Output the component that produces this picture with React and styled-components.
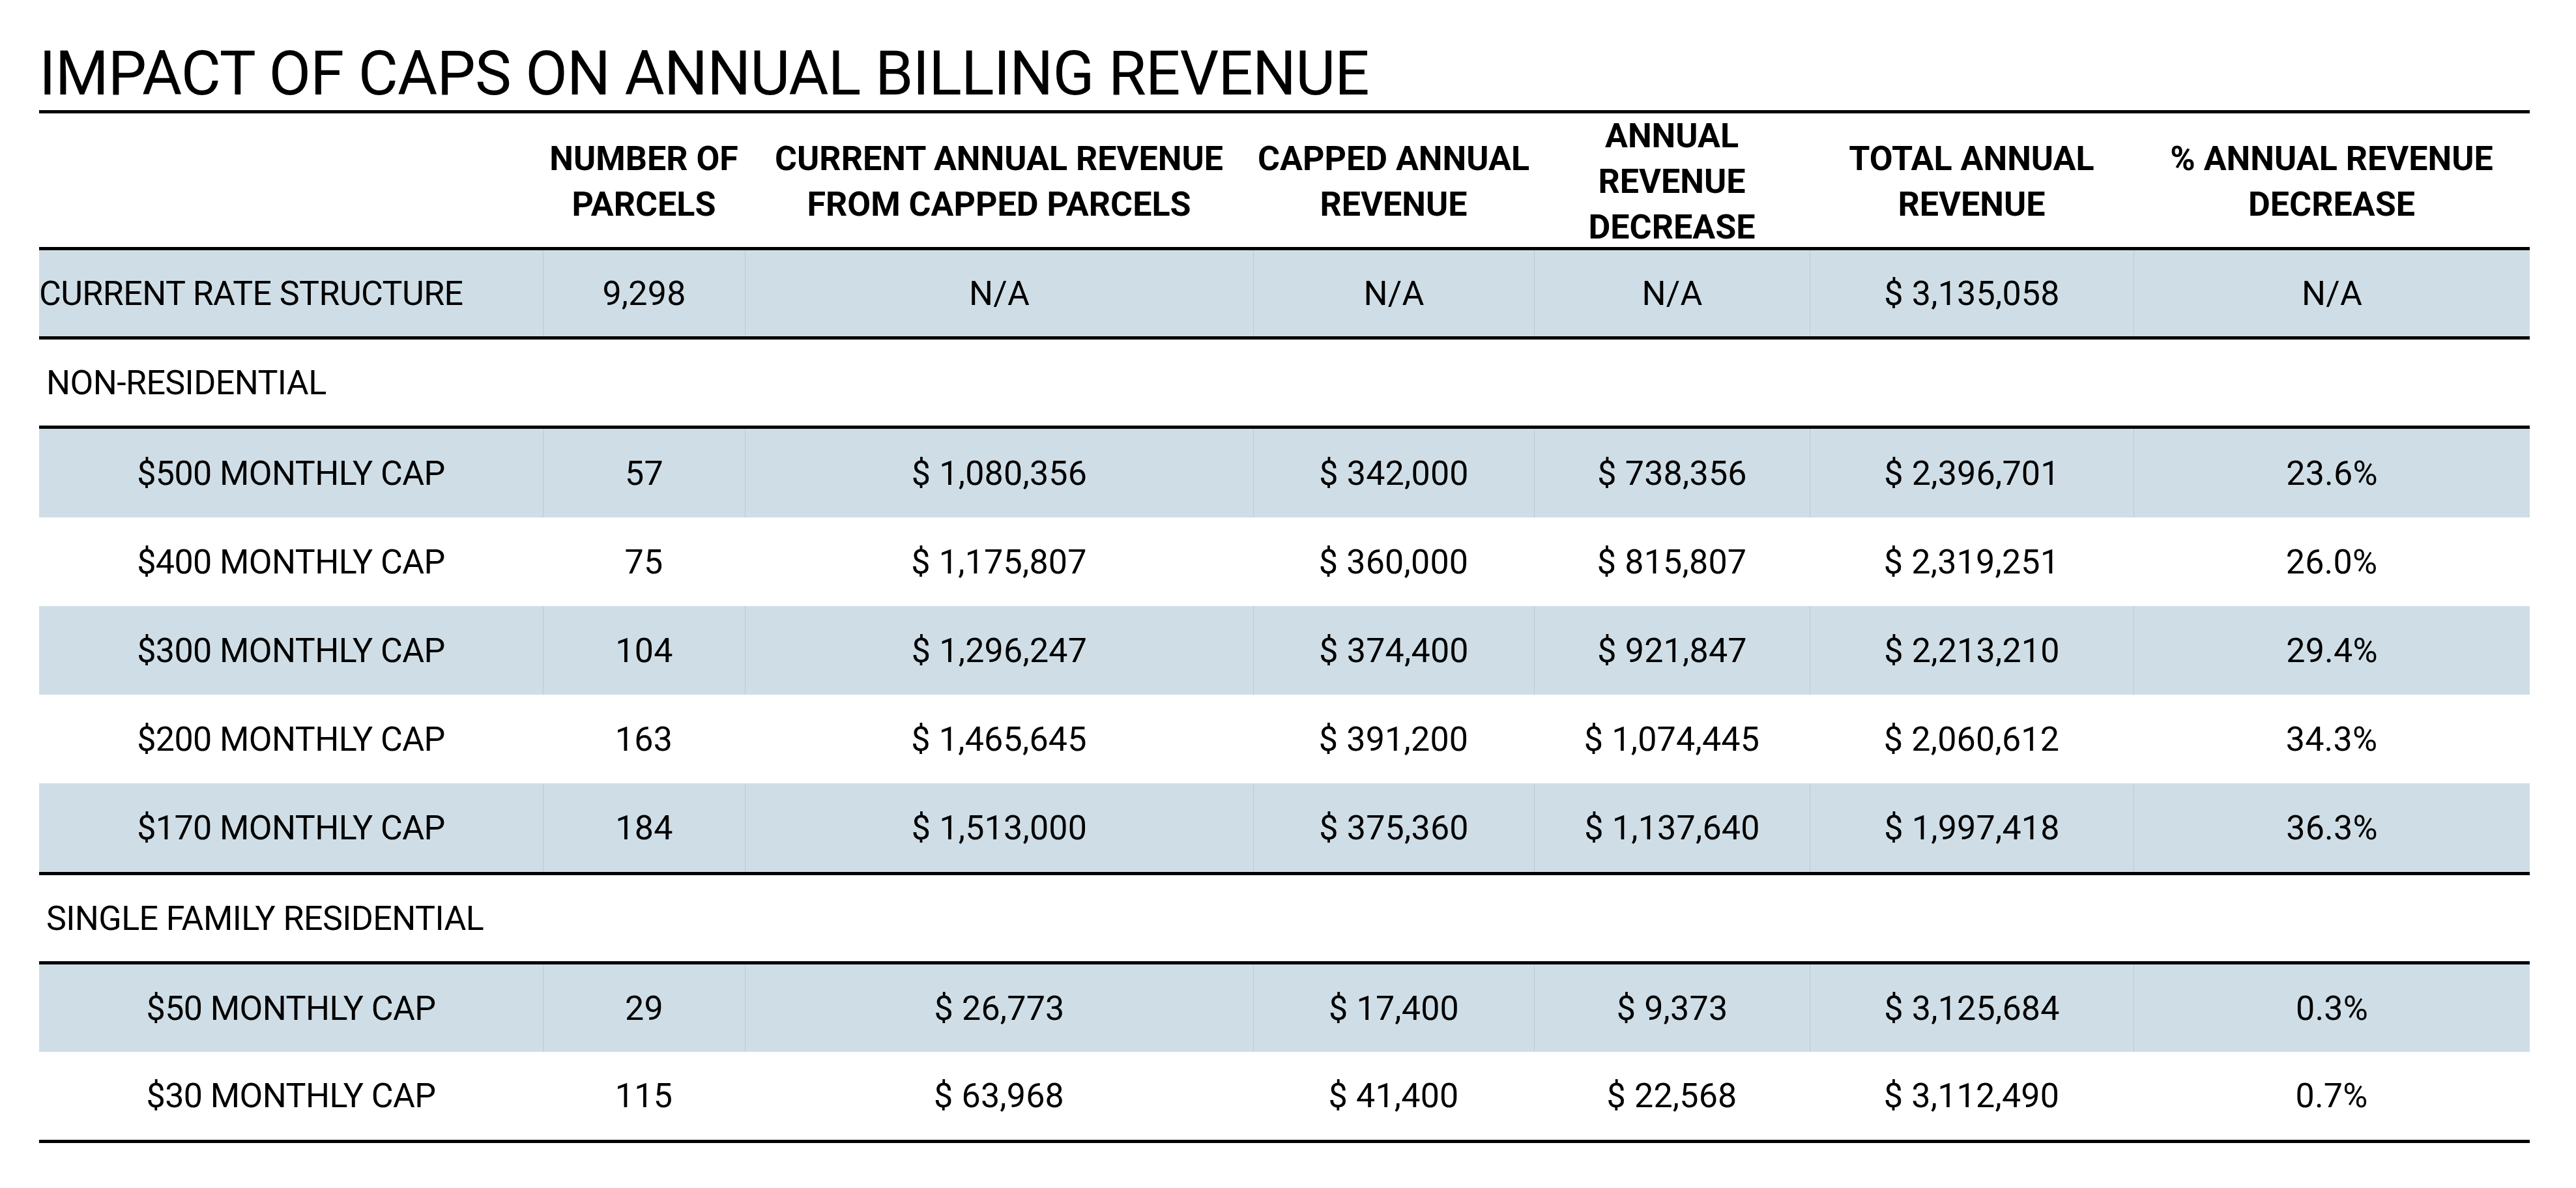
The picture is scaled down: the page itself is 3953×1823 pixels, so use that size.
import React from "react";
import styled, { createGlobalStyle } from "styled-components";

const GlobalStyle = createGlobalStyle`
  html, body {
    margin: 0;
    padding: 0;
    background: #ffffff;
  }
  body {
    font-family: Roboto, "Liberation Sans", Arial, sans-serif;
    color: #000000;
  }
`;

const COLS = "773px 310px 780px 431px 423px 497px 608px";

const Page = styled.div`
  padding: 66px 0 0 60px;
  width: 3822px;
`;

const Title = styled.h1`
  margin: 0;
  padding-bottom: 9px;
  border-bottom: 5px solid #000;
  font-family: Roboto, "Liberation Sans", sans-serif;
  font-weight: 400;
  font-size: 94px;
  line-height: 94px;
  letter-spacing: -0.9px;
  white-space: nowrap;
`;

const Row = styled.div`
  display: grid;
  grid-template-columns: ${COLS};
  height: ${(p) => p.$h}px;
  background: ${(p) => (p.$shaded ? "#cfdee6" : "#ffffff")};
  border-bottom: ${(p) => (p.$ruled ? "5px solid #000" : "none")};
  box-sizing: content-box;
`;

const HeadCell = styled.div`
  display: flex;
  align-items: center;
  justify-content: center;
  text-align: center;
  font-weight: 700;
  font-size: 52px;
  line-height: 70px;
  white-space: nowrap;
`;

const Cell = styled.div`
  display: flex;
  align-items: center;
  justify-content: ${(p) => (p.$left ? "flex-start" : "center")};
  font-size: 52px;
  letter-spacing: ${(p) => (p.$label ? "-0.6px" : "0.2px")};
  white-space: nowrap;
  border-left: ${(p) => (p.$sep ? "1px solid #b9cbd4" : "none")};
`;

const SectionLabel = styled.div`
  grid-column: 1 / -1;
  display: flex;
  align-items: center;
  padding-left: 11px;
  font-size: 52px;
  letter-spacing: -0.6px;
  white-space: nowrap;
`;

const headers = [
  [],
  ["NUMBER OF", "PARCELS"],
  ["CURRENT ANNUAL REVENUE", "FROM CAPPED PARCELS"],
  ["CAPPED ANNUAL", "REVENUE"],
  ["ANNUAL", "REVENUE", "DECREASE"],
  ["TOTAL ANNUAL", "REVENUE"],
  ["% ANNUAL REVENUE", "DECREASE"],
];

const current = ["CURRENT RATE STRUCTURE", "9,298", "N/A", "N/A", "N/A", "$ 3,135,058", "N/A"];

const nonRes = [
  ["$500 MONTHLY CAP", "57", "$ 1,080,356", "$ 342,000", "$ 738,356", "$ 2,396,701", "23.6%"],
  ["$400 MONTHLY CAP", "75", "$ 1,175,807", "$ 360,000", "$ 815,807", "$ 2,319,251", "26.0%"],
  ["$300 MONTHLY CAP", "104", "$ 1,296,247", "$ 374,400", "$ 921,847", "$ 2,213,210", "29.4%"],
  ["$200 MONTHLY CAP", "163", "$ 1,465,645", "$ 391,200", "$ 1,074,445", "$ 2,060,612", "34.3%"],
  ["$170 MONTHLY CAP", "184", "$ 1,513,000", "$ 375,360", "$ 1,137,640", "$ 1,997,418", "36.3%"],
];

const sfr = [
  ["$50 MONTHLY CAP", "29", "$ 26,773", "$ 17,400", "$ 9,373", "$ 3,125,684", "0.3%"],
  ["$30 MONTHLY CAP", "115", "$ 63,968", "$ 41,400", "$ 22,568", "$ 3,112,490", "0.7%"],
];

function DataRow({ values, shaded, ruled, h, leftFirst }) {
  return (
    <Row $shaded={shaded} $ruled={ruled} $h={h}>
      {values.map((v, i) => (
        <Cell
          key={i}
          $left={leftFirst && i === 0}
          $label={i === 0}
          $sep={shaded && i > 0}
        >
          {v}
        </Cell>
      ))}
    </Row>
  );
}

export default function App() {
  return (
    <>
      <GlobalStyle />
      <Page>
        <Title>IMPACT OF CAPS ON ANNUAL BILLING REVENUE</Title>
        <Row $h={205} $ruled>
          {headers.map((lines, i) => (
            <HeadCell key={i}>
              <div>
                {lines.map((l, j) => (
                  <div key={j}>{l}</div>
                ))}
              </div>
            </HeadCell>
          ))}
        </Row>
        <DataRow values={current} shaded ruled h={132} leftFirst />
        <Row $h={132} $ruled>
          <SectionLabel>NON-RESIDENTIAL</SectionLabel>
        </Row>
        {nonRes.map((r, i) => (
          <DataRow
            key={r[0]}
            values={r}
            shaded={i % 2 === 0}
            ruled={i === nonRes.length - 1}
            h={136}
          />
        ))}
        <Row $h={132} $ruled>
          <SectionLabel>SINGLE FAMILY RESIDENTIAL</SectionLabel>
        </Row>
        {sfr.map((r, i) => (
          <DataRow
            key={r[0]}
            values={r}
            shaded={i % 2 === 0}
            ruled={i === sfr.length - 1}
            h={i === 0 ? 134 : 135}
          />
        ))}
      </Page>
    </>
  );
}
